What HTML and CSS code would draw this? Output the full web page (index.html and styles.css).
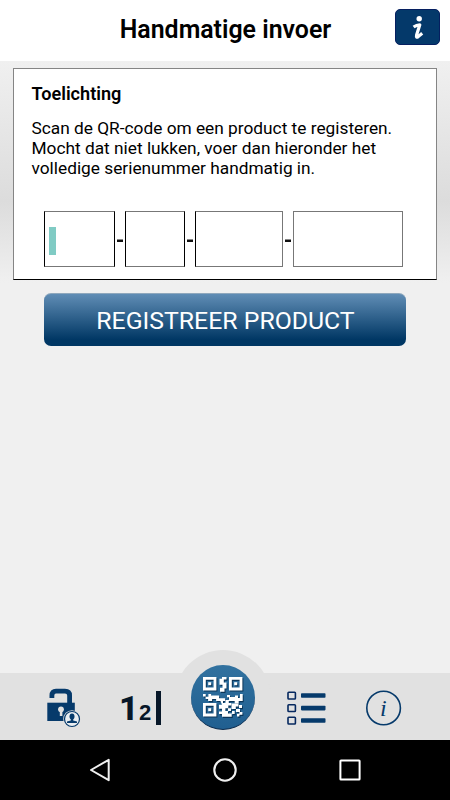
FILE: index.html
```html
<!DOCTYPE html>
<html lang="nl">
<head>
    <meta charset="UTF-8">
    <meta name="viewport" content="width=device-width, initial-scale=1.0">
    <title>Handmatige invoer</title>
    <link rel="stylesheet" href="styles.css">
</head>
<body>
    <header class="header">
        <h1 class="header-title">Handmatige invoer</h1>
        <button class="info-btn" aria-label="Info">
            <svg width="45" height="36" viewBox="0 0 45 36">
                <circle cx="24.2" cy="9.8" r="2.7" fill="#fff"/>
                <path d="M18.6 18 Q21.5 15.8 24.8 15.8 L21.6 26 Q20.9 29.2 23.2 27.6 L27.2 24.2" fill="none" stroke="#fff" stroke-width="3.2" stroke-linejoin="round"/>
            </svg>
        </button>
    </header>

    <main class="content">
        <section class="card">
            <h2 class="card-title">Toelichting</h2>
            <p class="card-text">
                <span class="line">Scan de QR-code om een product te registeren.</span>
                <span class="line">Mocht dat niet lukken, voer dan hieronder het</span>
                <span class="line">volledige serienummer handmatig in.</span>
            </p>
            <div class="serial">
                <div class="serial-field serial-a"><span class="cursor"></span></div>
                <span class="dash"></span>
                <div class="serial-field serial-b"></div>
                <span class="dash"></span>
                <div class="serial-field serial-c"></div>
                <span class="dash"></span>
                <div class="serial-field serial-d"></div>
            </div>
        </section>
        <button class="register-btn">REGISTREER PRODUCT</button>
    </main>

    <nav class="tabs">
        <!-- unlock -->
        <a class="tab tab-lock">
            <svg width="34" height="40" viewBox="0 0 34 40">
                <path d="M4.9 10 V7.5 Q4.9 3.2 9 3.2 H18 Q22.6 3.2 22.6 7.5 V16" fill="none" stroke="#063a6b" stroke-width="4.8"/>
                <rect x="0.3" y="14.7" width="27.5" height="18.3" fill="#063a6b"/>
                <circle cx="14" cy="21.3" r="2.9" fill="#e1e1e1"/>
                <rect x="12.8" y="22" width="2.6" height="6" fill="#e1e1e1"/>
                <circle cx="25" cy="31" r="8.8" fill="#e1e1e1"/>
                <circle cx="25" cy="31" r="7.5" fill="#e9edf1" stroke="#063a6b" stroke-width="1.2"/>
                <ellipse cx="25" cy="28.4" rx="2.5" ry="2.9" fill="#063a6b"/>
                <path d="M23.8 30 H26.2 V32.5 L30 33.6 V35 H20 V33.6 L23.8 32.5 Z" fill="#063a6b"/>
            </svg>
        </a>
        <!-- serial number entry -->
        <a class="tab tab-number"><span class="num-1">1</span><span class="num-2">2</span><span class="num-bar"></span></a>
        <!-- scanner -->
        <a class="tab tab-scan">
            <span class="scan-circle">
                <svg width="42" height="42" viewBox="0 0 42 42">
                    <defs>
                        <g id="finder">
                            <path d="M0 0 H13.4 V13.4 H0 Z M2.8 2.8 V10.6 H10.6 V2.8 Z" fill-rule="evenodd"/>
                            <rect x="5.2" y="5.2" width="3" height="3"/>
                        </g>
                        <g id="qr">
                            <use href="#finder"/>
                            <use href="#finder" x="26"/>
                            <use href="#finder" y="26"/>
                            <path d="M19 0h4.5v2.6h-2.7v2.8h2.7v6h-2v3.4h-4.5v-4h2.5v-3h-3v-6h2.5z"/>
                            <path d="M0 17h2.7v2.7h2.7v-2.7h2.7v1.5h8v2.7h6v2.7h-9v-2h-4v2.2h-4v-2h-2.5v-2.5h-2.6z"/>
                            <path d="M24 18h3v2h5v-1.5h3v2.6h2v-4h2.7v7h-4v2.4h-4v-2.4h-6v2.3h-3v-3.4h3.3v-2.7h-2z"/>
                            <path d="M17 23h3v3h2.6v-3h2.7v3h3v2.6h-3v2.7h2.7v2.6h-3v-2.6h-2.6v2.6h2.6v2.7h4v-2.5h2.7v3h-3v2.6h-9.7v-2.7h-3v-2.6h3v-2.7h-3v-4h3z"/>
                            <path d="M28.5 26.5h7v3h-2.7v2.4h-4.3zM36 28h3v3h-3zM33 32h4v3h2.4v2.7h-3v-2.7h-3.4zM34 36.8h2.4v2.7h-2.4z"/>
                        </g>
                    </defs>
                    <use href="#qr" x="1" y="1.2" fill="#0b3558"/>
                    <use href="#qr" fill="#fff"/>
                </svg>
            </span>
        </a>
        <!-- product list -->
        <a class="tab tab-list">
            <svg width="39" height="34" viewBox="0 0 39 34">
                <g fill="none" stroke="#06285f" stroke-width="1.6">
                    <rect x="1" y="1.2" width="7.4" height="6.8" rx="0.8"/>
                    <rect x="1" y="13.7" width="7.4" height="6.8" rx="0.8"/>
                    <rect x="1" y="26.2" width="7.4" height="6.8" rx="0.8"/>
                </g>
                <g fill="#063a6b">
                    <rect x="14" y="2.2" width="24.5" height="4.6" rx="0.8"/>
                    <rect x="14" y="14.8" width="24.5" height="4.6" rx="0.8"/>
                    <rect x="14" y="27.2" width="24.5" height="4.6" rx="0.8"/>
                </g>
            </svg>
        </a>
        <!-- about -->
        <a class="tab tab-about">
            <svg width="36" height="36" viewBox="0 0 36 36">
                <circle cx="17.6" cy="18" r="16.8" fill="none" stroke="#063a6b" stroke-width="1.6"/>
                <text class="about-i" x="17.4" y="25.6" text-anchor="middle">i</text>
            </svg>
        </a>
    </nav>

    <div class="system-bar">
        <svg width="22" height="26" viewBox="0 0 22 26"><path d="M2 13 L19.7 2.8 V23.2 Z" fill="none" stroke="#f0f0f0" stroke-width="2" stroke-linejoin="round"/></svg>
        <svg width="24" height="26" viewBox="0 0 24 26"><circle cx="12" cy="13" r="10.7" fill="none" stroke="#f0f0f0" stroke-width="2.1"/></svg>
        <svg width="22" height="26" viewBox="0 0 22 26"><rect x="1.4" y="3.4" width="19.2" height="19.2" rx="0.6" fill="none" stroke="#fff" stroke-width="2"/></svg>
    </div>
</body>
</html>
```
FILE: styles.css
```css
:root {
    --navy: #063a6b;
    --bar: #e1e1e1;
    --page: #f0f0f0;
}

* {
    margin: 0;
    padding: 0;
    box-sizing: border-box;
}

body {
    width: 450px;
    height: 800px;
    display: flex;
    flex-direction: column;
    overflow: hidden;
    background: var(--page);
    color: #000;
    font-family: Roboto, sans-serif;
}

.header {
    height: 61px;
    display: grid;
    grid-template-columns: 56px 1fr 56px;
    background: #fff;
}

.header-title {
    grid-column: 2;
    padding: 13px 0 0 1px;
    font-size: 24.9px;
    font-weight: 600;
    line-height: 34px;
    text-align: center;
}

.info-btn {
    width: 45px;
    height: 36px;
    margin: 9px 0 0 1px;
    border: 1px solid #061f60;
    border-radius: 5px;
    background: #04396a;
}

.info-btn svg {
    display: block;
    margin: -1px;
}

.content {
    flex: 1;
    padding: 7px 13px 0;
    background: linear-gradient(#f0f0f0, #dcdcdc 140px, #f0f0f0 222px);
}

.card {
    height: 212px;
    padding: 14px 17.5px 0;
    border: 1px solid #858585;
    border-bottom-color: #000;
    background: #fff;
}

.card-title {
    font-size: 18.1px;
    font-weight: 600;
    line-height: 22px;
}

.card-text {
    margin-top: 13px;
    font-size: 17.3px;
    line-height: 20px;
}

.line {
    display: block;
    white-space: nowrap;
}

.serial {
    display: flex;
    align-items: center;
    margin: 33px 0 0 12.5px;
}

.serial-field {
    height: 56px;
    border: 1px solid #000;
    border-top-color: #777;
    border-bottom-color: #777;
}

.serial-a {
    width: 71px;
    padding: 15px 0 0 4px;
}

.serial-b {
    width: 60px;
}

.serial-c {
    width: 88px;
    border-right-color: #777;
}

.serial-d {
    width: 110px;
    border-color: #777;
}

.cursor {
    display: block;
    width: 7px;
    height: 28px;
    background: #80cbc4;
}

.dash {
    width: 6px;
    height: 3px;
    margin: 2px 2px 0;
    border-top: 1px solid #888;
    background: #111;
}

.register-btn {
    display: block;
    width: 362px;
    height: 53px;
    margin: 13px 0 0 31px;
    padding: 1px 0 0 1px;
    border: 0;
    border-top: 1px solid #8fa8bd;
    border-radius: 7px;
    background: linear-gradient(#608db5, #003764 88%);
    color: #fff;
    font-family: Roboto, sans-serif;
    font-size: 24.8px;
    line-height: 52px;
    white-space: nowrap;
}

.tabs {
    height: 67px;
    display: flex;
    align-items: flex-start;
    background: var(--bar);
}

.tab {
    display: flex;
    color: #071728;
}

.tab svg {
    display: block;
}

.tab-lock {
    margin: 15px 0 0 47px;
}

.tab-number {
    width: 42px;
    height: 34px;
    margin: 18px 0 0 38px;
    font-family: "Liberation Sans", sans-serif;
    font-weight: bold;
}

.num-1 {
    width: 20px;
    font-family: Roboto, sans-serif;
    font-size: 34px;
    font-weight: 800;
    line-height: 34px;
}

.num-2 {
    width: 17px;
    font-size: 22px;
    line-height: 43px;
}

.num-bar {
    flex: none;
    width: 5px;
    height: 34px;
    background: #071728;
}

.tab-scan {
    width: 96px;
    height: 90px;
    margin: -23px 0 0 14px;
    padding: 15px 0 0 16px;
    border-radius: 48px 48px 0 0;
    background: var(--bar);
}

.scan-circle {
    width: 64px;
    height: 65px;
    display: flex;
    padding: 12px 0 0 12px;
    border-radius: 50%;
    border-bottom: 1px solid #08284b;
    background: linear-gradient(#31719f, #205f90);
}

.tab-list {
    margin: 18px 0 0 16px;
}

.tab-about {
    margin: 17px 0 0 40px;
}

.about-i {
    fill: var(--navy);
    font-family: "Liberation Serif", serif;
    font-size: 24px;
    font-style: italic;
}

.system-bar {
    height: 60px;
    display: flex;
    align-items: center;
    justify-content: space-between;
    padding: 0 89px;
    background: #000;
}
```
